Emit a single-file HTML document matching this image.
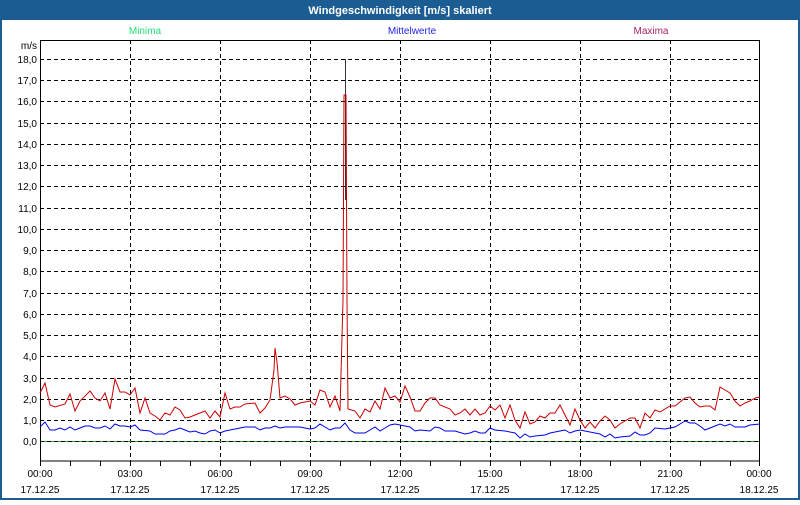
<!DOCTYPE html>
<html><head><meta charset="utf-8"><style>
html,body{margin:0;padding:0;}
body{width:800px;height:500px;overflow:hidden;background:#fff;font-family:"Liberation Sans",sans-serif;}
</style></head><body>
<svg width="800" height="500" xmlns="http://www.w3.org/2000/svg" font-family="Liberation Sans, sans-serif" font-size="11">
<rect x="0" y="0" width="800" height="500" fill="#fff"/>
<rect x="0" y="0" width="800" height="20" fill="#1b5c92"/>
<rect x="0" y="0" width="2" height="500" fill="#1b5c92"/>
<rect x="798" y="0" width="2" height="500" fill="#1b5c92"/>
<rect x="0" y="498" width="800" height="2" fill="#1b5c92"/>
<text x="400" y="14" fill="#fff" font-weight="bold" text-anchor="middle" font-size="11">Windgeschwindigkeit [m/s] skaliert</text>
<text x="145" y="34" fill="#22dd77" text-anchor="middle" font-size="10">Minima</text>
<text x="412" y="34" fill="#2222ee" text-anchor="middle" font-size="10">Mittelwerte</text>
<text x="651" y="34" fill="#aa2266" text-anchor="middle" font-size="10">Maxima</text>
<g stroke="#000" stroke-dasharray="4,3" stroke-width="1">
<line x1="40" y1="59.5" x2="760" y2="59.5"/><line x1="40" y1="80.5" x2="760" y2="80.5"/><line x1="40" y1="101.5" x2="760" y2="101.5"/><line x1="40" y1="123.5" x2="760" y2="123.5"/><line x1="40" y1="144.5" x2="760" y2="144.5"/><line x1="40" y1="165.5" x2="760" y2="165.5"/><line x1="40" y1="186.5" x2="760" y2="186.5"/><line x1="40" y1="208.5" x2="760" y2="208.5"/><line x1="40" y1="229.5" x2="760" y2="229.5"/><line x1="40" y1="250.5" x2="760" y2="250.5"/><line x1="40" y1="271.5" x2="760" y2="271.5"/><line x1="40" y1="293.5" x2="760" y2="293.5"/><line x1="40" y1="314.5" x2="760" y2="314.5"/><line x1="40" y1="335.5" x2="760" y2="335.5"/><line x1="40" y1="356.5" x2="760" y2="356.5"/><line x1="40" y1="378.5" x2="760" y2="378.5"/><line x1="40" y1="399.5" x2="760" y2="399.5"/><line x1="40" y1="420.5" x2="760" y2="420.5"/>
<line x1="130.5" y1="40" x2="130.5" y2="461"/><line x1="220.5" y1="40" x2="220.5" y2="461"/><line x1="310.5" y1="40" x2="310.5" y2="461"/><line x1="400.5" y1="40" x2="400.5" y2="461"/><line x1="490.5" y1="40" x2="490.5" y2="461"/><line x1="580.5" y1="40" x2="580.5" y2="461"/><line x1="670.5" y1="40" x2="670.5" y2="461"/>
</g>
<line x1="40" y1="441.5" x2="760" y2="441.5" stroke="#22aa22" stroke-width="1"/>
<line x1="40" y1="441.5" x2="760" y2="441.5" stroke="#000" stroke-dasharray="4,3" stroke-width="1"/>
<rect x="40.5" y="40.5" width="719" height="420.5" fill="none" stroke="#000" stroke-width="1"/>
<g stroke="#000" stroke-width="1">
<line x1="40.5" y1="461" x2="40.5" y2="466"/><line x1="70.5" y1="461" x2="70.5" y2="466"/><line x1="100.5" y1="461" x2="100.5" y2="466"/><line x1="130.5" y1="461" x2="130.5" y2="466"/><line x1="160.5" y1="461" x2="160.5" y2="466"/><line x1="190.5" y1="461" x2="190.5" y2="466"/><line x1="220.5" y1="461" x2="220.5" y2="466"/><line x1="250.5" y1="461" x2="250.5" y2="466"/><line x1="280.5" y1="461" x2="280.5" y2="466"/><line x1="310.5" y1="461" x2="310.5" y2="466"/><line x1="340.5" y1="461" x2="340.5" y2="466"/><line x1="370.5" y1="461" x2="370.5" y2="466"/><line x1="400.5" y1="461" x2="400.5" y2="466"/><line x1="430.5" y1="461" x2="430.5" y2="466"/><line x1="460.5" y1="461" x2="460.5" y2="466"/><line x1="490.5" y1="461" x2="490.5" y2="466"/><line x1="520.5" y1="461" x2="520.5" y2="466"/><line x1="550.5" y1="461" x2="550.5" y2="466"/><line x1="580.5" y1="461" x2="580.5" y2="466"/><line x1="610.5" y1="461" x2="610.5" y2="466"/><line x1="640.5" y1="461" x2="640.5" y2="466"/><line x1="670.5" y1="461" x2="670.5" y2="466"/><line x1="700.5" y1="461" x2="700.5" y2="466"/><line x1="730.5" y1="461" x2="730.5" y2="466"/><line x1="759.5" y1="461" x2="759.5" y2="466"/>
</g>
<g font-size="10" fill="#000" text-anchor="end">
<text x="37" y="49">m/s</text>
<text x="37" y="63">18,0</text><text x="37" y="84">17,0</text><text x="37" y="105">16,0</text><text x="37" y="127">15,0</text><text x="37" y="148">14,0</text><text x="37" y="169">13,0</text><text x="37" y="190">12,0</text><text x="37" y="212">11,0</text><text x="37" y="233">10,0</text><text x="37" y="254">9,0</text><text x="37" y="275">8,0</text><text x="37" y="297">7,0</text><text x="37" y="318">6,0</text><text x="37" y="339">5,0</text><text x="37" y="360">4,0</text><text x="37" y="382">3,0</text><text x="37" y="403">2,0</text><text x="37" y="424">1,0</text><text x="37" y="445">0,0</text>
</g>
<g font-size="10" fill="#000" text-anchor="middle">
<text x="40" y="477">00:00</text><text x="130" y="477">03:00</text><text x="220" y="477">06:00</text><text x="310" y="477">09:00</text><text x="400" y="477">12:00</text><text x="490" y="477">15:00</text><text x="580" y="477">18:00</text><text x="670" y="477">21:00</text><text x="759" y="477">00:00</text>
<text x="40" y="493">17.12.25</text><text x="130" y="493">17.12.25</text><text x="220" y="493">17.12.25</text><text x="310" y="493">17.12.25</text><text x="400" y="493">17.12.25</text><text x="490" y="493">17.12.25</text><text x="580" y="493">17.12.25</text><text x="670" y="493">17.12.25</text><text x="759" y="493">18.12.25</text>
</g>
<line x1="345.5" y1="59" x2="345.5" y2="200" stroke="#333" stroke-width="1"/>
<polyline fill="none" stroke="#0000ee" stroke-width="1" points="40,427 45,422 50,430 55,430 60,428 65,430 70,427 75,430 80,428 85,426 90,426 95,428 100,428 105,426 110,429 115,424 120,426 125,426 130,427 135,425 140,430 150,431 155,434 165,434 170,431 175,430 180,428 185,430 190,432 195,431 200,433 205,434 210,431 215,430 220,433 225,431 230,430 240,428 245,427 255,427 260,430 265,428 270,428 275,426 280,428 285,427 300,427 305,428 310,429 315,428 320,424 325,427 330,430 335,428 340,428 345,423 350,430 355,433 365,433 370,430 375,427 380,431 385,428 390,425 395,424 400,425 410,427 415,431 420,430 430,431 435,427 440,428 445,431 455,431 465,434 470,433 475,431 480,433 485,433 490,428 495,430 505,431 515,433 520,438 525,434 530,437 535,436 545,435 550,433 560,431 565,430 570,433 575,431 580,430 585,431 595,433 600,434 605,437 610,434 615,438 620,437 630,436 635,432 640,435 645,435 650,433 655,428 665,429 670,428 675,427 680,424 685,421 690,423 695,423 700,426 705,430 710,428 715,426 720,424 725,426 730,424 735,427 745,427 750,425 760,424"/>
<polyline fill="none" stroke="#cc0000" stroke-width="1" points="40,393 45,383 50,405 55,407 65,404 70,394 75,411 80,401 90,391 95,398 100,401 105,393 110,409 115,379 120,392 125,392 130,395 135,388 140,413 145,398 150,413 155,416 160,420 165,413 170,415 175,407 180,410 185,418 190,417 195,415 200,413 205,411 210,418 215,411 220,417 225,393 230,409 235,407 240,407 245,404 255,403 260,413 265,408 270,400 274,370 275,348 277,362 280,398 285,396 290,399 295,405 300,403 310,401 315,405 320,390 325,392 330,407 335,396 340,411 343,300 344,95 345,95 346,95 347,300 348,409 355,411 360,418 365,409 370,412 375,401 380,409 385,388 390,398 395,396 400,402 405,386 410,397 415,411 420,411 425,403 430,398 435,398 440,405 450,409 455,415 460,413 465,409 470,415 475,409 480,415 485,413 490,406 495,410 500,405 505,418 510,405 515,420 520,428 525,412 530,424 535,422 540,416 545,418 550,413 555,413 560,405 565,415 570,425 575,409 580,420 585,428 590,422 595,428 600,421 605,416 610,420 615,428 620,424 630,418 635,418 640,428 645,413 650,418 655,410 660,412 670,406 675,406 680,402 685,398 690,397 695,403 700,407 705,406 710,406 715,410 720,387 725,390 730,393 735,401 740,406 745,403 750,401 755,398 760,397"/>
</svg>
</body></html>
